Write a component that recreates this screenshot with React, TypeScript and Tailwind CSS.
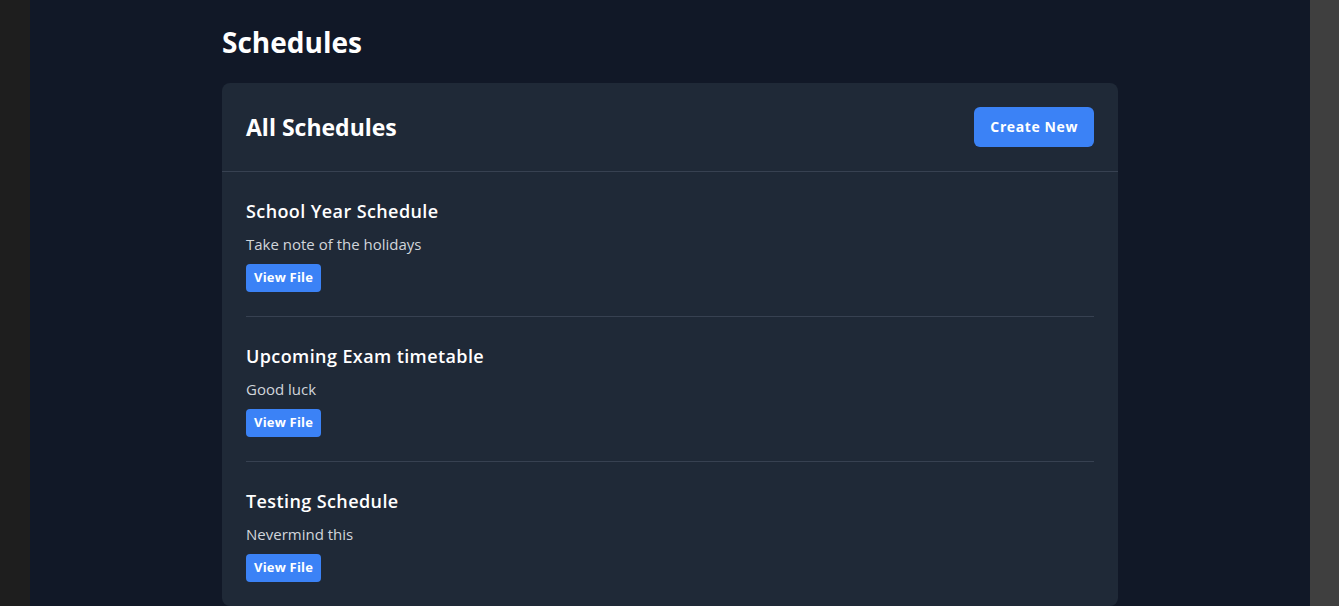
const schedules = [
  { title: 'School Year Schedule', note: 'Take note of the holidays' },
  { title: 'Upcoming Exam timetable', note: 'Good luck' },
  { title: 'Testing Schedule', note: 'Nevermind this' },
]

export default function App() {
  return (
    <div className="flex h-[606px] overflow-hidden bg-[#1e1e1e] font-['Open_Sans',sans-serif]">
      <div className="w-[30px] shrink-0" />
      <main className="flex-1 bg-[#111827] px-6 pt-6">
        <div className="mx-auto max-w-4xl">
          <h1 className="mb-[23px] text-[28px] font-bold leading-9 text-white">Schedules</h1>
          <section className="rounded-lg bg-[#1f2937]">
            <header className="flex items-center justify-between border-b border-[#374151] px-6 py-6">
              <h2 className="text-[23px] font-bold leading-8 text-white">All Schedules</h2>
              <button
                type="button"
                className="h-10 rounded-md bg-[#3b82f6] px-4 text-sm font-bold tracking-[0.6px] text-white"
              >
                Create New
              </button>
            </header>
            <ul className="px-6">
              {schedules.map((item, i) => (
                <li
                  key={item.title}
                  className={i < schedules.length - 1 ? 'border-b border-[#374151] py-6' : 'py-6'}
                >
                  <h3 className="mb-2 pt-px text-lg font-semibold leading-7 tracking-[0.4px] text-white">
                    {item.title}
                  </h3>
                  <p className="mb-2 -mt-px text-[15px] leading-6 text-[#d1d5db]">{item.note}</p>
                  <button
                    type="button"
                    className="h-7 rounded bg-[#3b82f6] px-2 text-[13px] font-bold tracking-[0.2px] text-white"
                  >
                    View File
                  </button>
                </li>
              ))}
            </ul>
          </section>
        </div>
      </main>
      <div className="w-[29px] shrink-0 bg-[#3f3f3f]" />
    </div>
  )
}
